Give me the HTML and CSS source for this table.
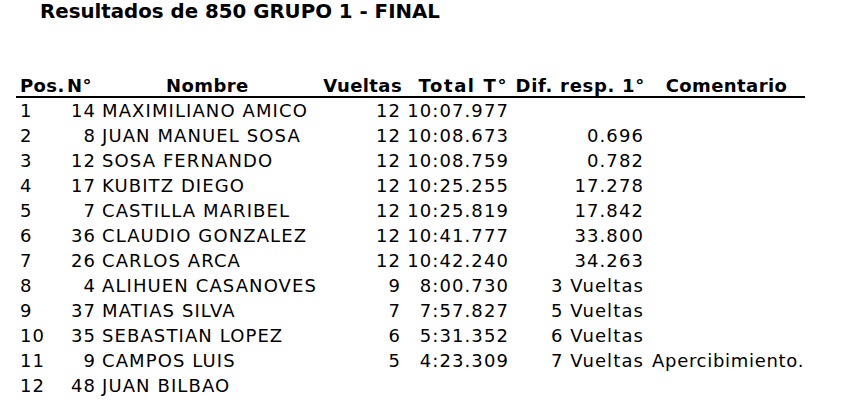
FILE: index.html
```html
<!DOCTYPE html>
<html lang="es">
<head>
<meta charset="utf-8">
<title>Resultados</title>
<link rel="stylesheet" href="styles.css">
</head>
<body>
<h1 class="title">Resultados de 850 GRUPO 1 - FINAL</h1>
<table class="results">
  <colgroup>
    <col class="c-pos"><col class="c-num"><col class="c-name"><col class="c-laps"><col class="c-total"><col class="c-diff"><col class="c-comment">
  </colgroup>
  <thead>
    <tr>
      <th class="h-pos">Pos.</th>
      <th class="h-num">N°</th>
      <th class="h-name">Nombre</th>
      <th class="h-laps">Vueltas</th>
      <th class="h-total">Total T°</th>
      <th class="h-diff">Dif. resp. 1°</th>
      <th class="h-comment">Comentario</th>
    </tr>
  </thead>
  <tbody>
    <tr><td class="pos">1</td><td class="num">14</td><td class="name">MAXIMILIANO AMICO</td><td class="laps">12</td><td class="total">10:07.977</td><td class="diff"></td><td class="comment"></td></tr>
    <tr><td class="pos">2</td><td class="num">8</td><td class="name">JUAN MANUEL SOSA</td><td class="laps">12</td><td class="total">10:08.673</td><td class="diff">0.696</td><td class="comment"></td></tr>
    <tr><td class="pos">3</td><td class="num">12</td><td class="name">SOSA FERNANDO</td><td class="laps">12</td><td class="total">10:08.759</td><td class="diff">0.782</td><td class="comment"></td></tr>
    <tr><td class="pos">4</td><td class="num">17</td><td class="name">KUBITZ DIEGO</td><td class="laps">12</td><td class="total">10:25.255</td><td class="diff">17.278</td><td class="comment"></td></tr>
    <tr><td class="pos">5</td><td class="num">7</td><td class="name">CASTILLA MARIBEL</td><td class="laps">12</td><td class="total">10:25.819</td><td class="diff">17.842</td><td class="comment"></td></tr>
    <tr><td class="pos">6</td><td class="num">36</td><td class="name">CLAUDIO GONZALEZ</td><td class="laps">12</td><td class="total">10:41.777</td><td class="diff">33.800</td><td class="comment"></td></tr>
    <tr><td class="pos">7</td><td class="num">26</td><td class="name">CARLOS ARCA</td><td class="laps">12</td><td class="total">10:42.240</td><td class="diff">34.263</td><td class="comment"></td></tr>
    <tr><td class="pos">8</td><td class="num">4</td><td class="name">ALIHUEN CASANOVES</td><td class="laps">9</td><td class="total">8:00.730</td><td class="diff">3 Vueltas</td><td class="comment"></td></tr>
    <tr><td class="pos">9</td><td class="num">37</td><td class="name">MATIAS SILVA</td><td class="laps">7</td><td class="total">7:57.827</td><td class="diff">5 Vueltas</td><td class="comment"></td></tr>
    <tr><td class="pos">10</td><td class="num">35</td><td class="name">SEBASTIAN LOPEZ</td><td class="laps">6</td><td class="total">5:31.352</td><td class="diff">6 Vueltas</td><td class="comment"></td></tr>
    <tr><td class="pos">11</td><td class="num">9</td><td class="name">CAMPOS LUIS</td><td class="laps">5</td><td class="total">4:23.309</td><td class="diff">7 Vueltas</td><td class="comment">Apercibimiento.</td></tr>
    <tr><td class="pos">12</td><td class="num">48</td><td class="name">JUAN BILBAO</td><td class="laps"></td><td class="total"></td><td class="diff"></td><td class="comment"></td></tr>
  </tbody>
</table>
</body>
</html>
```

FILE: styles.css
```css
html, body {
  margin: 0;
  padding: 0;
  background: #ffffff;
  color: #000000;
  font-family: "DejaVu Sans", Verdana, sans-serif;
}

body {
  padding: 0 0 0 16px;
}

.title {
  margin: 0;
  padding: 0 0 0 24px;
  font-size: 19.8px;
  font-weight: bold;
  line-height: 24px;
}

.results {
  margin-top: 47px;
  border-collapse: collapse;
  table-layout: fixed;
  width: 789px;
  font-size: 18px;
  letter-spacing: 1.1px;
}

.c-pos { width: 49px; }
.c-num { width: 33px; }
.c-name { width: 220px; }
.c-laps { width: 85px; }
.c-total { width: 108px; }
.c-diff { width: 137px; }
.c-comment { width: 157px; }

.results th {
  font-weight: bold;
  letter-spacing: 0.4px;
  height: 25px;
  padding: 0;
  white-space: nowrap;
  border-bottom: 2px solid #000000;
  vertical-align: bottom;
}

.results td {
  height: 25px;
  padding: 0;
  white-space: nowrap;
  vertical-align: middle;
}

.h-pos { text-align: left; padding-left: 4px !important; }
.h-num { text-align: left; padding-left: 2px !important; }
.h-name { text-align: left; padding-left: 68px !important; }
.h-laps { text-align: right; padding-right: 1px !important; }
.results .h-total { text-align: right; padding-right: 3px; letter-spacing: 1.6px; }
.results .h-diff { text-align: right; padding-right: 3px; letter-spacing: 0.7px; }
.h-comment { text-align: center; }

.pos { text-align: left; padding-left: 4px !important; }
.num { text-align: right; padding-right: 2px !important; }
.name { text-align: left; padding-left: 4px !important; }
.laps { text-align: right; padding-right: 2px !important; }
.total { text-align: right; padding-right: 2px !important; }
.diff { text-align: right; padding-right: 4px !important; }
.results .comment { text-align: left; padding-left: 4px; letter-spacing: 0.7px; }
```
